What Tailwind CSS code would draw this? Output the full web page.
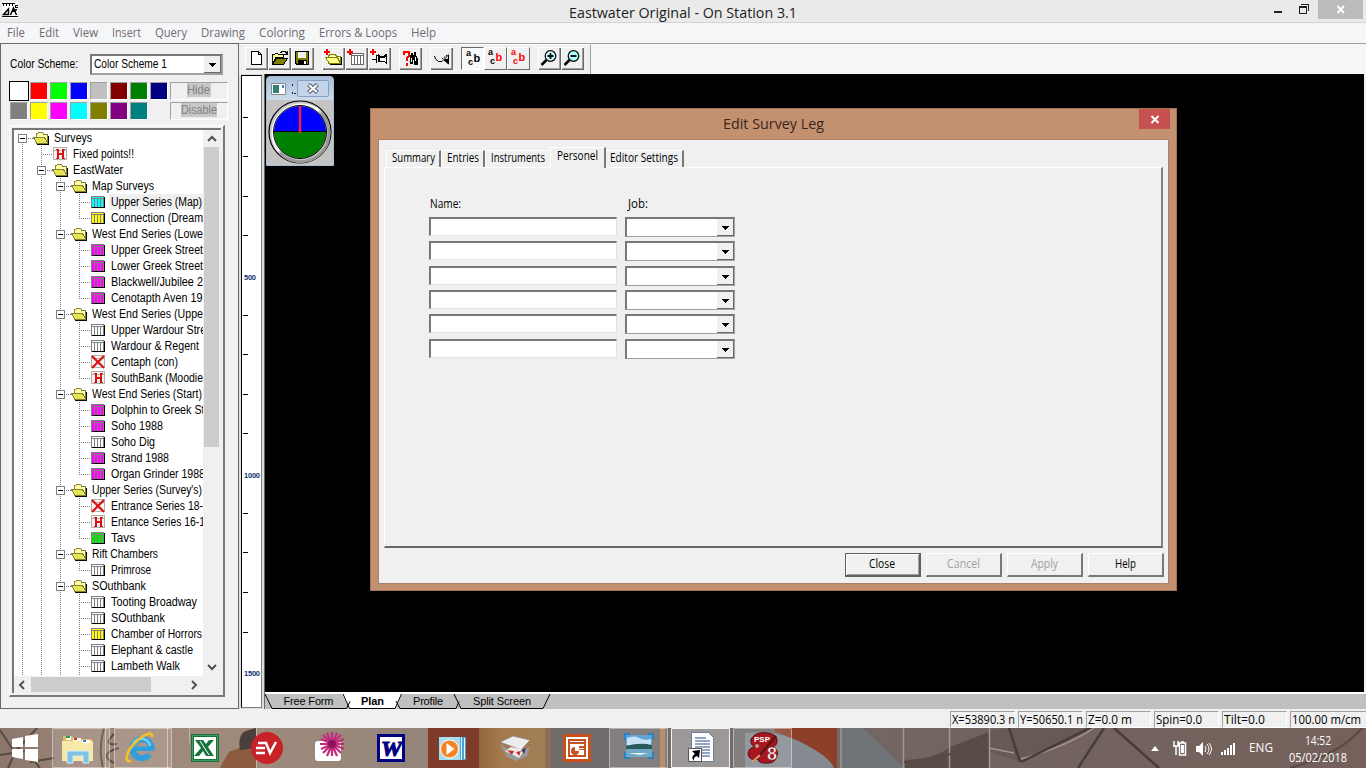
<!DOCTYPE html>
<html lang="en">
<head>
<meta charset="utf-8">
<title>Eastwater Original - On Station 3.1</title>
<script src="https://cdn.jsdelivr.net/npm/@tailwindcss/browser@4"></script>
</head>
<body data-font="12px 'Liberation Sans'" class="w-[1366px] h-[768px] overflow-hidden bg-[#f0f0f0] font-['Liberation_Sans',sans-serif] text-[12px] leading-4 text-black whitespace-nowrap">
<div class="flex flex-col h-[768px]">

  <!-- Title bar -->
  <header class="relative h-[23px] shrink-0 bg-[#eaeaea] border-b border-[#d4d4d6] flex justify-between">
    <svg class="mt-[2px] ml-[2px]" width="16" height="16" shape-rendering="crispEdges"><path fill="#fff" d="M0 0h16v16H0z"/><path d="M0 1h13v1H0zM1 2h1v2H1zM4 2h1v2H4zM7 2h1v2H7zM10 2h1v2h-1zM13 3h3v1h-2v1h2v1h-3zM0 14h16v1H0z"/><path shape-rendering="auto" fill="none" stroke="#000" stroke-width="1.500" d="M1.500 12.500 6.500 7v5.500zM8.500 13l3-7 3 7M10 9.500l5-2"/></svg>
    <h1 data-font="15px 'Open Sans'" class="absolute left-[569px] top-[2px] leading-5 font-['Open_Sans',sans-serif] text-[15px] text-[#222]"><span data-w="228">Eastwater Original - On Station 3.1</span></h1>
    <svg width="100" height="19" class="mr-[3px]" shape-rendering="crispEdges"><path fill="#222" d="M11 11h8v2h-8z"/><path fill="none" stroke="#222" d="M36.500 6.500h7v7h-7zM36 7.500h8M38 4.500h7.500V11"/><path fill="#bcbcbc" d="M55 0h45v19H55z"/><path shape-rendering="auto" stroke="#fff" stroke-width="1.900" d="m74.500 6 6.500 7m0-7-6.500 7"/></svg>
  </header>

  <!-- Menu -->
  <nav data-font="12px 'Open Sans'" class="h-[20px] shrink-0 bg-[#f5f6f8] pl-[7px] pt-[2px] flex font-['Open_Sans',sans-serif] text-[12px] text-[#716b72]">
    <div class="w-8"><span data-w="18">File</span></div><div class="w-[34px]"><span data-w="20">Edit</span></div><div class="w-[39px]"><span data-w="25">View</span></div><div class="w-[43px]"><span data-w="29">Insert</span></div><div class="w-[46px]"><span data-w="32">Query</span></div><div class="w-[58px]"><span data-w="44">Drawing</span></div><div class="w-[60px]"><span data-w="46">Coloring</span></div><div class="w-[92px]"><span data-w="78">Errors &amp; Loops</span></div><div><span data-w="25">Help</span></div>
  </nav>

  <div class="flex h-[666px] shrink-0">
    <!-- Side panel -->
    <aside class="w-[239px] shrink-0 border border-[#696969] bg-[#f0f0f0] pl-[8px]">
      <div class="flex items-start pt-[10px]">
        <label class="w-[81px] pt-[2px]"><span class="ml-[1px]"><span data-w="68">Color Scheme:</span></span></label>
        <div class="w-[133px] h-[21px] bg-white border-2 border-[#787878] border-r-[#a0a0a0] border-b-[#a0a0a0] flex justify-between">
          <span class="pl-[2px]"><span data-w="73">Color Scheme 1</span></span>
          <svg width="17" height="17" shape-rendering="crispEdges"><path fill="#f0f0f0" d="M0 0h17v17H0z"/><path fill="none" stroke="#696969" d="M0 16.500h16.500V0"/><path d="M5 7h7v1H5zM6 8h5v1H6zM7 9h3v1H7zM8 10h1v1H8z"/></svg>
        </div>
      </div>
      <div class="flex pt-[6px]">
        <div id="swatches" class="grid grid-cols-[repeat(8,20px)] auto-rows-[20px] w-[161px]"></div>
        <div class="flex flex-col gap-[2px] pt-[1px] text-[#808080] text-center leading-[14px]">
          <div class="w-[58px] h-[18px] border border-[#a0a0a0] border-r-white border-b-white"><span class="bg-[#c8c8c8] inline-block h-[14px]"><span data-w="23">Hide</span></span></div>
          <div class="w-[58px] h-[18px] border border-[#a0a0a0] border-r-white border-b-white"><span class="bg-[#c8c8c8] inline-block h-[14px]"><span data-w="36">Disable</span></span></div>
        </div>
      </div>
      <div class="mt-[4px] w-[216px] h-[572px] border-t border-l border-t-white border-l-white border-r-2 border-b-2 border-r-[#787878] border-b-[#787878] pl-[2px] pt-[2px]">
        <div class="w-[209px] h-[565px] border-t-2 border-l-2 border-[#787878] bg-[#f0f0f0]">
          <div class="flex h-[546px]">
            <div id="tree" class="w-[189px] h-[546px] overflow-hidden bg-white"></div>
            <div class="w-[17px] flex flex-col items-center">
              <svg width="16" height="17"><path fill="none" stroke="#505050" stroke-width="2" d="m4 11 4-4 4 4"/></svg>
              <div class="w-[15px] h-[300px] bg-[#cdcdcd]"></div>
              <div class="flex-1"></div>
              <svg width="16" height="17"><path fill="none" stroke="#505050" stroke-width="2" d="m4 6 4 4 4-4"/></svg>
            </div>
          </div>
          <div class="flex h-[15px] mt-[1px]">
            <svg width="17" height="15"><path fill="none" stroke="#505050" stroke-width="2" d="m10 4-4 4 4 4"/></svg>
            <div class="w-[120px] bg-[#cdcdcd]"></div>
            <svg class="ml-[35px]" width="17" height="15"><path fill="none" stroke="#505050" stroke-width="2" d="m6 4 4 4-4 4"/></svg>
          </div>
        </div>
      </div>
    </aside>

    <div class="w-[1127px] flex flex-col">
      <!-- Toolbar -->
      <div class="h-[31px] flex bg-[#f5f6f8] border-t border-[#a0a0a0] shrink-0">
        <div class="w-[352px] bg-[#f0f0f0] border-r border-[#a0a0a0] border-t border-t-white flex pl-[6px] pt-[2px] gap-[8px]">
          <div class="flex">
            <svg class="tb" viewBox="0 0 23 23"><path fill="#fff" stroke="#000" d="M6.500 4.500h7l3 3v10h-10zM13.500 4.500v3h3"/></svg>
            <svg class="tb" viewBox="0 0 23 23"><path fill="#ff8" stroke="#000" d="M4.500 17.500v-10h2l1-1h2l1 1h5v3H8z"/><path fill="#808000" stroke="#000" d="m4.500 17.500 4-6h11l-4 6z"/><path fill="none" stroke="#000" d="M12 5.500h1l1-1h3l2 2m0-2.500v3h-3"/></svg>
            <svg class="tb" viewBox="0 0 23 23"><path fill="#808000" stroke="#000" d="M4.500 4.500h13v13H6l-1.500-1.500z"/><path fill="#f0f0f0" d="M7 5h8v6H7z"/><path d="M7 13h9v5H7z"/><path fill="#fff" d="M13 14h2v3h-2z"/></svg>
          </div>
          <div class="flex">
            <svg class="tb" viewBox="0 0 23 23"><path fill="#ffc" stroke="#808000" d="M6.500 16V9l2-2h4l2 2h4v7H7z"/><path fill="#ff8" stroke="#808000" d="m3.500 10.500 4 6h11l-3-6z"/><path fill="none" stroke="#000" d="M8 17.500h11.500V10"/><path stroke="#f00" stroke-width="2" d="M2 5h6M5 2v6"/></svg>
            <svg class="tb" viewBox="0 0 23 23"><path fill="#fff" stroke="#696969" d="M6.500 6.500h12v11h-12zM6 8.500h13M9.500 8v9m3-9v9m3-9v9"/><path stroke="#f00" stroke-width="2" d="M2 5h6M5 2v6"/></svg>
            <svg class="tb" viewBox="0 0 23 23"><path fill="#fff" stroke="#000" d="M10.500 9.500h6l2-2v9l-2-2h-6z"/><path fill="none" stroke="#000" d="M4 12.500h4M8.500 8v8m1-7h2v6"/><path fill="none" stroke="#000" stroke-width="2" d="m10 8 2 2h4l2-2"/><path stroke="#f00" stroke-width="2" d="M2 5h6M5 2v6"/></svg>
          </div>
          <div class="flex">
            <svg class="tb" viewBox="0 0 23 23"><path d="M12 6h2v2h1V5h2v3l2 4v6h-4v-5h-1v4h-3v-7z"/><path fill="#fff" d="M12 11h1v4h-1zM16 10h1v4h-1z"/><path fill="none" stroke="#f00" stroke-width="2" d="M5 8V5h5v4L7.500 11v3m0 2v2.500"/></svg>
          </div>
          <div class="flex">
            <svg class="tb" viewBox="0 0 23 23"><g shape-rendering="auto" fill="none" stroke="#000"><path d="m4.500 9 1 3 3 2.500h3.500l6.500-6.500v9"/><path stroke-dasharray="1.500 1" d="m12 12 6.500-5"/><path fill="#000" d="m14 13 4.500-1v5z"/></g></svg>
          </div>
          <div class="flex font-bold">
            <div class="size-[23px] bg-[#f8f8f8] border border-[#696969] border-r-white border-b-white"><svg width="21" height="21"><text x="4" y="8" font-size="9">a</text><text x="6" y="17" font-size="9">c</text><text x="11.500" y="14" font-size="11">b</text></svg></div>
            <div class="size-[23px] border border-white border-r-[#696969] border-b-[#696969]"><svg width="21" height="21"><text x="3" y="7" font-size="9">a</text><text x="5" y="16" font-size="9">c</text><text x="10.500" y="13" font-size="11" fill="#f00">b</text></svg></div>
            <div class="size-[23px] border border-white border-r-[#696969] border-b-[#696969]"><svg width="21" height="21" fill="#f00"><text x="3" y="7" font-size="9">a</text><text x="5" y="16" font-size="9">c</text><text x="10.500" y="13" font-size="11">b</text></svg></div>
          </div>
          <div class="flex">
            <svg class="tb" viewBox="0 0 23 23"><g shape-rendering="auto"><circle cx="12.500" cy="9" r="5.300" fill="#cff" stroke="#000" stroke-width="1.200"/><path stroke="#000" stroke-width="2.500" d="m8.500 13-5 5"/><path stroke="#000" stroke-width="1.800" d="M9.500 9h6m-3-3v6"/></g></svg>
            <svg class="tb" viewBox="0 0 23 23"><g shape-rendering="auto"><circle cx="12.500" cy="9" r="5.300" fill="#aff" stroke="#000" stroke-width="1.200"/><path stroke="#000" stroke-width="2.500" d="m8.500 13-5 5"/><path stroke="#000" stroke-width="1.800" d="M9.500 9h6"/></g></svg>
          </div>
        </div>
      </div>

      <div class="flex h-[635px] bg-[#c0c0c0]">
        <!-- Ruler -->
        <div class="w-[26px] pt-[1px] pl-[2px] bg-[#dcdcdc] border-r border-[#696969]">
          <svg id="ruler" class="bg-white border border-black border-r-[#808080] border-b-[#808080]" width="21" height="633" shape-rendering="crispEdges" font-family="Liberation Sans" font-size="7.500" font-weight="bold"></svg>
        </div>
        <div class="w-[1101px] flex flex-col">
          <!-- Drawing canvas with floating windows -->
          <main class="relative h-[618px] bg-black border-r-2 border-[#f0f0f0]">
            <div class="absolute left-[1px] top-[2px] w-[68px] h-[90px] bg-[#c4c4c4] border border-[#a6bdd6] rounded-t-[4px] overflow-hidden">
              <div class="h-[23px] bg-gradient-to-b from-[#a9c0dc] to-[#ccdbeb] flex pt-[3px] pl-[4px]">
                <svg width="26" height="19"><path fill="#fff" stroke="#8a8a8a" d="M.5 3.500h14v11H.5z"/><path fill="#2f8070" d="M2 5h6v8H2z"/><path fill="#5080c0" d="M11 5h2v3h-2z"/><path fill="#223" d="M21 4h1v2h-1zM21 12h1v2h-1zM23 13h2v1h-2z"/></svg>
                <div class="w-[32px] h-[17px] border border-[#849fc2] rounded-[2px] bg-[#c3d4e8]"><svg width="30" height="15"><path stroke="#555f70" stroke-width="4.200" d="m10.500 3.500 9 8m0-8-9 8"/><path stroke="#fff" stroke-width="2.200" d="m11 4 8 7m0-7-8 7"/></svg></div>
              </div>
              <svg width="66" height="66"><circle cx="33" cy="32" r="31" fill="#c8c8c8" stroke="#000" stroke-width="1.200"/><path fill="none" stroke="#fff" stroke-width="3" d="M12 51a28.500 28.500 0 0 1 40-40"/><path fill="none" stroke="#999" stroke-width="3" d="M54 13a28.500 28.500 0 0 1-41 40"/><path fill="#00f" d="M7 32a26 26 0 0 1 52 0z"/><path fill="#008000" d="M7 32a26 26 0 0 0 52 0z"/><circle cx="33" cy="32" r="26.500" fill="none" stroke="#000"/><path stroke="#000" d="M7 31.500h52"/><path stroke="#f02040" stroke-width="2.500" d="M33 6v27"/></svg>
            </div>

            <!-- Dialog -->
            <section class="absolute left-[105px] top-[34px] w-[807px] h-[483px] bg-[#c39170] border border-[#a07458] pl-[7px]">
              <div class="h-[30px] flex justify-end">
                <h2 data-font="15px 'Open Sans'" class="absolute left-[352px] top-[4px] leading-5 font-['Open_Sans',sans-serif] text-[15px] text-[#3a251a]"><span data-w="101">Edit Survey Leg</span></h2>
                <svg class="mr-[6px]" width="31" height="20"><path fill="#c75050" d="M0 0h31v20H0z"/><path stroke="#fff" stroke-width="1.900" d="m12.500 7 7 7m0-7-7 7"/></svg>
              </div>
              <div data-font="12px 'Open Sans'" class="w-[791px] h-[445px] bg-[#f0f0f0] border border-[#a8826c] pl-[5px] pt-[7px] font-['Open_Sans',sans-serif] text-[12px]">
                <div class="flex items-end h-[20px] pl-[2px] relative leading-[14px]">
                  <div class="w-[55px] h-[17px] border-l border-t border-white border-r-2 border-r-[#787878] pl-[5px]"><span data-w="43">Summary</span></div>
                  <div class="w-[44px] h-[17px] border-l border-t border-white border-r-2 border-r-[#787878] pl-[5px]"><span data-w="32">Entries</span></div>
                  <div class="w-[65px] h-[17px] border-l border-t border-white pl-[5px]"><span data-w="54">Instruments</span></div>
                  <div class="w-[56px] h-[21px] -mb-px bg-[#f0f0f0] border-l border-t border-white border-r-2 border-r-[#787878] pl-[6px] pt-[1px] z-10"><span data-w="41">Personel</span></div>
                  <div class="w-[78px] h-[17px] border-t border-white border-r-2 border-r-[#787878] pl-[4px]"><span data-w="68">Editor Settings</span></div>
                </div>
                <div class="w-[779px] h-[381px] border-l border-t border-white border-r-2 border-b-2 border-r-[#808080] border-b-[#696969] pl-[44px] pt-[28px]">
                  <div class="flex leading-4"><div class="w-[198px] pl-px"><span data-w="31">Name:</span></div><div class="pl-px"><span data-w="20">Job:</span></div></div>
                  <div id="crew" class="pt-[5px]"></div>
                </div>
                <div class="flex justify-end gap-[5px] mt-[5px] pr-[4px] text-center leading-[20px]">
                  <div class="w-[76px] h-[24px] border border-[#606060] border-r-2 border-b-2 shadow-[inset_1px_1px_#fff,inset_-1px_-1px_#a0a0a0] pr-px"><span data-w="26">Close</span></div>
                  <div class="w-[76px] h-[24px] border border-white border-r-2 border-b-2 border-r-[#787878] border-b-[#787878] text-[#a0a0a0]"><span data-w="33">Cancel</span></div>
                  <div class="w-[76px] h-[24px] border border-white border-r-2 border-b-2 border-r-[#787878] border-b-[#787878] text-[#a0a0a0]"><span data-w="27">Apply</span></div>
                  <div class="w-[76px] h-[24px] border border-white border-r-2 border-b-2 border-r-[#787878] border-b-[#787878]"><span data-w="21">Help</span></div>
                </div>
              </div>
            </section>
          </main>
          <!-- View tabs -->
          <div class="h-[17px] border-t-2 border-white bg-[#c0c0c0]">
            <svg width="300" height="15" font-family="Liberation Sans" font-size="11"><path fill="#fff" d="M77 0h60l-6 14H84z"/><path fill="none" stroke="#000" d="m0 0 7 14.500h74.500l3.500-7M78 0l6.500 14.500H130L136.500 0M131 7l4 7.500h56l3-7M189 0l7 14.500h82L285 0"/><text x="18.500" y="11" textLength="50">Free Form</text><text x="96" y="11" font-weight="bold" textLength="23">Plan</text><text x="148" y="11" textLength="30">Profile</text><text x="208" y="11" textLength="58">Split Screen</text></svg>
          </div>
        </div>
      </div>
    </div>
  </div>

  <!-- Status bar -->
  <footer data-font="12px 'Open Sans'" class="h-[19px] shrink-0 bg-[#f0f0f0] flex justify-end gap-[3px] pt-[2px] font-['Open_Sans',sans-serif] text-[12px]">
    <div class="w-[65px] h-[17px] border border-[#a0a0a0] border-r-white border-b-white pl-px leading-[16px]"><span data-w="63">X=53890.3 n</span></div>
    <div class="w-[65px] h-[17px] border border-[#a0a0a0] border-r-white border-b-white pl-px leading-[16px]"><span data-w="63">Y=50650.1 n</span></div>
    <div class="w-[65px] h-[17px] border border-[#a0a0a0] border-r-white border-b-white pl-px leading-[16px]"><span data-w="44">Z=0.0 m</span></div>
    <div class="w-[65px] h-[17px] border border-[#a0a0a0] border-r-white border-b-white pl-px leading-[16px]"><span data-w="46">Spin=0.0</span></div>
    <div class="w-[65px] h-[17px] border border-[#a0a0a0] border-r-white border-b-white pl-px leading-[16px]"><span data-w="41">Tilt=0.0</span></div>
    <div class="w-[76px] h-[17px] border border-[#a0a0a0] border-r-0 border-b-white pl-px leading-[16px]"><span data-w="69">100.00 m/cm</span></div>
  </footer>

  <!-- Taskbar -->
  <div class="relative h-[40px] shrink-0 bg-[#82736d] overflow-hidden">
    <svg class="absolute inset-0" width="1366" height="40" preserveAspectRatio="none">
      <defs>
        <linearGradient id="wood"><stop offset="0" stop-color="#8a776d"/><stop offset=".06" stop-color="#9c8577"/><stop offset=".14" stop-color="#a18a7b"/><stop offset=".3" stop-color="#96867a"/><stop offset=".45" stop-color="#777170"/><stop offset=".7" stop-color="#716460"/><stop offset="1" stop-color="#75605a"/></linearGradient>
        <linearGradient id="tan"><stop offset="0" stop-color="#946741"/><stop offset=".3" stop-color="#a5794b"/><stop offset="1" stop-color="#a08058"/></linearGradient>
      </defs>
      <path fill="url(#wood)" d="M0 0h1366v40H0z"/>
      <path fill="none" stroke="#5a4a42" stroke-width="2" d="M0 2 15 25 8 40M0 27l26-4 14 17M14 25 37 0M30 34l24-4M114 6q-12 12 3 10m2 4q-22 6-5 15m-10-35q-6 20-1 40"/>
      <path fill="#8b5b40" d="M220 40q6-12 10-17 17-2 18-20l8-3v40z"/><path fill="#4b3f3b" d="M240 22q-3-18 9-20l7-2v20z"/>
      <path stroke="#c1b3a8" d="M256.500 0v40M189.500 0v15"/>
      <path fill="#7f3b29" d="M428 0h51v40h-51z"/><path fill="url(#tan)" d="M479 0h73v40h-73z"/><path fill="#8d6c57" d="M545 0h6v40h-6z"/><path fill="#716c6b" d="M551 0h210v40H551z"/><path fill="#ae7e55" d="M660 0h5v40h-5z"/>
      <path fill="#8c3f29" d="M775 0h62v40h-20q-15-30-42-36z"/><path fill="#858a92" d="M745 5q35-4 65 14 20 11 24 21h-89z"/><path fill="#6f7479" d="M841 0h22l41 40h-63z"/><path fill="#594c48" d="M905 32q30-1 45-13l39-15v36h-84z"/><path fill="#655a56" d="M990 3l20-3h80l-72 33-28-9z"/>
      <path fill="none" stroke="#a5968d" stroke-width="1.500" d="M841 0v40M903.500 0v40M949.500 0v40M989.500 0v40M1021 31q45-12 73-31M989 20l25 5"/>
      <path fill="none" stroke="#493c38" stroke-width="2.500" d="m1009 0 11 34M1021 34 1100-5M1114 0l45 40M1078 40l26-40"/>
      <path fill="none" stroke="#5a4842" stroke-width="2" d="M1290 40q50-14 72-40M904 34q40 2 68-22"/>
    </svg>
    <div class="relative h-full flex">
      <svg width="800" height="40" class="shrink-0">
        <path fill="#fff" d="m12 11 11-2v10H12zM25 8l13-2v13H25zM12 21h11v10l-11-2zM25 21h13v13l-13-2z"/>
        <g fill="#fff" fill-opacity=".13" stroke="#fff" stroke-opacity=".45"><path d="M52.500.5h57v39h-57zM114.500.5h57v39h-57zM609.500.5h58v39h-58zM733.500.5h58v39h-58z"/><path fill="none" d="M105.500 0v40M167.500 0v40"/></g>
        <path fill="#fff" fill-opacity=".3" stroke="#f4f4f4" d="M671.500.5h58v39h-58z"/>
        <!-- Explorer -->
        <path fill="#e0bd62" d="M63 8h9l2 3h18v17H63z"/><path fill="#f8e9a6" d="M62 13h31v20H62z"/><path fill="#fff" d="M66 8h5v4h-5zM73 10h8v3h-8zM82 12h8v3h-8z"/><path fill="#20a050" d="M66 8h4v2h-4z"/><path fill="#d03020" d="M74 10h3v2h-3z"/><path fill="#3080d0" d="M83 12h3v2h-3z"/><path fill="#7fc2e2" stroke="#d5eff9" d="M67 35V23h22v12h-6v-7H73v7z"/>
        <!-- Internet Explorer -->
        <path fill="none" stroke="#2f9fe0" stroke-width="6" d="M151.500 20.500a9.500 9.500 0 1 0-2 6"/><path fill="none" stroke="#7fd6f7" stroke-width="2" d="M150 18a9 9 0 0 0-17-2"/><path fill="#2f9fe0" d="M134 18.500h20.500v4.500H134z"/><path fill="none" stroke="#f3c02d" stroke-width="2.800" d="M131 33c-8 2-4-10 3-17 8-9 19-14 18-7"/>
        <!-- Excel -->
        <path fill="#18743a" d="M191 6h28v28h-28z"/><path fill="#fff" d="M194 9h22v22h-22z"/><path fill="#18743a" d="M195 12h8l3 4 3-4h5l-6 7 6 9h-8l-3-5-4 5h-5l7-8z"/><path stroke="#fff" d="m200 13 9 14"/><path fill="none" stroke="#79b98b" stroke-dasharray="1 1" d="M192.500 7.500h25v25h-25z"/>
        <!-- ExpressVPN -->
        <circle cx="267" cy="20" r="16" fill="#c92128"/><path fill="none" stroke="#fff" stroke-width="2.500" d="M258 15h9m-11 5h9m-9 5h9m1-10 4 10 6-11"/>
        <!-- Flower -->
        <rect x="315" y="13" width="26" height="20" rx="3" fill="#fff"/><g stroke="#c32a7d" stroke-width="2.200"><path d="M332 4v24M320 16h24M323 7l18 18M341 7 323 25M327 5l10 23M337 5l-10 23M321 11l23 10M321 21l23-10"/></g><circle cx="332" cy="16" r="4" fill="#8d1459"/>
        <!-- Word -->
        <path fill="#000080" d="M377 6h28v28h-28z"/><path fill="#fff" d="M380 9h22v22h-22z"/><text x="381" y="28" font-family="Liberation Serif" font-size="22" font-weight="bold" font-style="italic" textLength="21" lengthAdjust="spacingAndGlyphs" fill="#000080" stroke="#000080">W</text>
        <!-- Media player -->
        <path fill="#4f9fce" d="M439 9h27v23h-27z"/><path fill="#a9dcef" d="M439 9h21v23h-21z"/><path stroke="#e4f6fc" d="M461.500 9v23M464.500 10v21"/><circle cx="449.500" cy="21" r="9" fill="#f58220" stroke="#fff"/><path fill="#fff" d="m446.500 15 8 6-8 6z"/>
        <!-- Scanner -->
        <path fill="#999" d="m500 16 14 9 16-6-3 9-11 5-9-4z"/><path fill="#ececec" stroke="#777" stroke-width=".6" d="m500 14 13-6 17 4-9 10z"/><path fill="#f4e8e8" d="m505 23 6-4 14 3-6 8z"/><path fill="#c03030" d="m507 22 5 5 2-4zM516 24l5-1-2 5z"/><path fill="#346" d="m521 22 5-2-2 6z"/>
        <!-- PowerPoint -->
        <path fill="#c8501c" d="M563 6h28v28h-28z"/><path fill="#fff" d="M566 9h22v22h-22z"/><path fill="none" stroke="#c8501c" stroke-width="2" d="M569 12h16v16h-16zM568 15h18"/><path fill="#c8501c" d="M575 19v4h4a4 4 0 1 1-4-4zM579 18h5v2h-5zM579 21h5v1h-5z"/>
        <!-- Picture viewer -->
        <path fill="#5fa5da" d="M626 7h26v22h-26z"/><path fill="#c5e2f5" d="M627 10q8-3 12 0 6 3 12 1v6h-24z"/><path fill="#2a5a58" d="M626 18q14-4 26-1v5h-26z"/><path fill="#6fa9c8" d="M626 21h26v8h-26z"/><path fill="#e8f4f0" d="M628 25h20l-8 2z"/><path fill="none" stroke="#2f7fb8" stroke-width="2" d="M625 12V6h5m18 0h5v6m0 12v6h-5m-18 0h-5v-6"/>
        <!-- Document shortcut -->
        <path fill="#fff" stroke="#68809c" d="M691.500 4.500h17l5 5v24h-22z"/><path stroke="#28498a" stroke-width="1.200" d="M695 10h11m-11 3h15m-15 3h15m-15 3h15m-8 3h8m-8 3h8m-8 3h8"/><path fill="#fff" stroke="#555" d="M688.500 20.500h13v13h-13z"/><path d="m692 23 8-1-1 8-2-2q-4 1-3 5-4-4 1-7z"/>
        <!-- Paint Shop Pro 8 -->
        <path fill="#a81620" stroke="#5d0e10" d="M751 11q5-8 17-6 10 2 9 8 0 5-5 6 7 1 5 9-2 7-8 7-11 1-11-4-9 2-10-5 0-6 7-7-5-2-4-8z"/><text x="754" y="14" fill="#fff" font-family="Liberation Sans" font-size="8" font-weight="bold" textLength="16">PSP</text><circle cx="757" cy="18" r="2" fill="#c89a8c"/><path stroke="#d69a62" stroke-width="2" d="m752 34 8-7"/><path stroke="#4e1a12" stroke-width="2" d="m760 27 16-19"/><text x="767" y="32" fill="#fff" stroke="#7a1010" stroke-width=".6" font-family="Liberation Sans" font-size="18" font-weight="bold">8</text>
      </svg>
      <div class="flex-1"></div>
      <!-- Tray -->
      <div data-font="12px 'Open Sans'" class="flex text-white font-['Open_Sans',sans-serif] text-[12px]">
        <svg width="99" height="40" fill="#fff"><path d="m1 23 4-5 4 5z"/><path fill="none" stroke="#fff" stroke-width="1.500" d="M29.500 15h6v12h-6zM24 13v5m4-5v5m-5 0h6m-3 0v9M31 14h3"/><path d="M31 17h3v8h-3z"/><path d="M46 18h3l4-4v14l-4-4h-3z"/><path fill="none" stroke="#fff" d="M55 18q2 3 0 6m2-8q4 5 0 10m2-11q5 6 0 12"/><path d="M71 24h2v3h-2zM74 22h2v5h-2zM77 20h2v7h-2zM80 17h2v10h-2zM83 15h2v12h-2z"/></svg>
        <div class="w-[39px] pt-[12px]"><span data-w="24">ENG</span></div>
        <div class="w-[60px] mr-[18px] pt-[5px] text-center"><div><span data-w="26">14:52</span></div><div class="mt-[1px]"><span data-w="58">05/02/2018</span></div></div>
      </div>
    </div>
  </div>
</div>

<script>
// Toolbar button frame
document.querySelectorAll('.tb').forEach(s => {
  s.setAttribute('class', 'block w-[23px] h-[23px] shadow-[inset_1px_1px_#fff,inset_-1px_-1px_#696969,inset_-2px_-2px_#a0a0a0]');
  s.setAttribute('shape-rendering', 'crispEdges');
});

// Palette
const colors = ['#fff','#f00','#0f0','#00f','#c0c0c0','#800000','#008000','#000080','#808080','#ff0','#f0f','#0ff','#808000','#800080','#008080'];
document.getElementById('swatches').innerHTML = colors.map((c, i) =>
  `<div class="${i ? 'mt-[1px] ml-[1px] w-[18px] h-[18px] border border-[#a0a0a0] border-r-white border-b-white' : 'w-[20px] h-[20px] border border-black'}" style="background:${c}"></div>`).join('');

// Survey tree: [level, icon, label, label width, selected]
const rows = [
  [0,'dir','Surveys',38],[1,'H','Fixed points!!',61],[1,'dir','EastWater',50],[2,'dir','Map Surveys',62],
  [3,'#0ff','Upper Series (Map)',91,1],[3,'#ff0','Connection (Dream',92],
  [2,'dir','West End Series (Lowe',111],[3,'#f0f','Upper Greek Street',92],[3,'#f0f','Lower Greek Street',92],[3,'#f0f','Blackwell/Jubilee 2',92],[3,'#f0f','Cenotapth Aven 19',92],
  [2,'dir','West End Series (Uppe',111],[3,'#fff','Upper Wardour Street',104],[3,'#fff','Wardour & Regent',88],[3,'X','Centaph (con)',67],[3,'H','SouthBank (Moodie',92],
  [2,'dir','West End Series (Start)',110],[3,'#f0f','Dolphin to Greek Street',112],[3,'#f0f','Soho 1988',52],[3,'#fff','Soho Dig',44],[3,'#f0f','Strand 1988',58],[3,'#f0f','Organ Grinder 1988',94],
  [2,'dir',"Upper Series (Survey's)",110],[3,'X','Entrance Series 18-',92],[3,'H','Entance Series 16-1',94],[3,'#0e0','Tavs',24],
  [2,'dir','Rift Chambers',66],[3,'#fff','Primrose',40],[2,'dir','SOuthbank',54],[3,'#fff','Tooting Broadway',86],[3,'#fff','SOuthbank',54],[3,'#ff0','Chamber of Horrors',91],[3,'#fff','Elephant & castle',82],[3,'#fff','Lambeth Walk',69],[3,'#ff0','',0]];
const glyph = k => {
  if (k === 'dir') return '<path fill="#ffffa0" stroke="#808040" d="M3.500 11V4l2-1.500h4l1 1.500h4v7z"/><path fill="#e6e650" stroke="#808040" d="M.5 7.500h11l3.500 6H4z"/><path fill="none" stroke="#000" d="M4 14.500h11.500V6"/>';
  if (k === 'H' || k === 'X') return '<path fill="#f4f4f4" stroke="#b0b0b0" d="M1.500 1.500h13v12h-13zM2 4.500h12"/>' + (k === 'H'
    ? '<path fill="none" stroke="#e01010" stroke-width="2" d="M6 3v10M11 3v10M6 8h5"/><path stroke="#e01010" d="M4 3.500h3m3 0h3M4 12.500h3m3 0h3"/>'
    : '<path shape-rendering="auto" stroke="#e01010" stroke-width="2.200" d="m2 2 12 12M14 2 2 14"/>');
  return `<path fill="${k}" stroke="#808080" d="M1.500 2.500h12v11h-12z"/><path fill="none" stroke="#808080" d="M1 4.500h12M4.500 4v9M7.500 4v9M10.500 4v9"/><path fill="none" stroke="#000" d="M2 13.500h12.500M14.500 3v11"/>`;
};
document.getElementById('tree').innerHTML = rows.map(([l, k, t, w, sel], i) => {
  let lines = '';
  const own = 8 + 19 * l;
  for (let a = 0; a <= l; a++) {
    const x = 8 + 19 * a, later = rows.slice(i + 1);
    const stop = later.findIndex(r => r[0] < a);
    const more = a < 3 || later.slice(0, stop < 0 ? undefined : stop).some(r => r[0] === a);
    const top = l === 0 ? 8 : 0;
    lines += `<path d="M${x}.5 ${top}V${more ? 16 : 8}"/>`;
  }
  if (k === 'dir') lines += `<path d="M${own + 19}.5 14v2"/>`;
  const box = k === 'dir' ? `<path fill="#fff" stroke="#808080" d="M${own - 4}.5 4.500h8v8h-8z"/><path stroke="#000" d="M${own - 2} 8.500h5"/>` : '';
  const label = t ? `<span class="${sel ? 'bg-[#f0f0f0] ml-[2px] pl-[2px] pr-[2px]' : 'pl-[4px]'}"><span data-w="${w}">${t.replace('&', '&amp;')}</span></span>` : '';
  return `<div class="flex h-[16px]"><svg class="shrink-0" width="${own + 28}" height="16" shape-rendering="crispEdges"><g stroke="#808080" stroke-dasharray="1 1">${lines}<path d="M${own} 8.500h12"/></g>${box}<g transform="translate(${own + 11} 0)">${glyph(k)}</g></svg>${label}</div>`;
}).join('');

// Ruler
let marks = '';
for (let n = 0; n < 15; n++) {
  const y = Math.round(40.500 + n * 39.62);
  marks += (n + 1) % 5 ? `<path stroke="#000" d="M1 ${y}.5h5"/>` : `<text x="2" y="${y + 5}" fill="#103070" textLength="${n < 5 ? 12 : 16}">${(n + 1) * 100}</text>`;
}
document.getElementById('ruler').innerHTML = marks;

// Name and job inputs
document.getElementById('crew').innerHTML = [24, 25, 24, 24, 25, 24].map(h =>
  `<div class="flex gap-[8px] items-start" style="height:${h}px"><div class="w-[188px] h-[19px] bg-white border-2 border-[#787878] border-r border-b border-r-[#e3e3e3] border-b-[#e3e3e3]"></div><div class="w-[110px] h-[20px] bg-white border-2 border-[#787878] border-b border-r border-r-[#a0a0a0] border-b-[#a0a0a0] flex justify-end"><svg width="17" height="17" shape-rendering="crispEdges"><path fill="#f0f0f0" d="M0 0h17v17H0z"/><path fill="none" stroke="#696969" d="M0 16.500h16.500V0"/><path d="M5 7h7v1H5zM6 8h5v1H6zM7 9h3v1H7zM8 10h1v1H8z"/></svg></div></div>`).join('');

// Condense each label to its given width
const pen = document.createElement('canvas').getContext('2d');
document.querySelectorAll('[data-w]').forEach(e => {
  pen.font = e.closest('[data-font]').dataset.font;
  const w = +e.dataset.w, natural = pen.measureText(e.textContent).width;
  e.style.cssText = `display:inline-block;transform-origin:0 0;transform:scaleX(${w / natural});margin-right:${w - natural}px`;
});
</script>
</body>
</html>
